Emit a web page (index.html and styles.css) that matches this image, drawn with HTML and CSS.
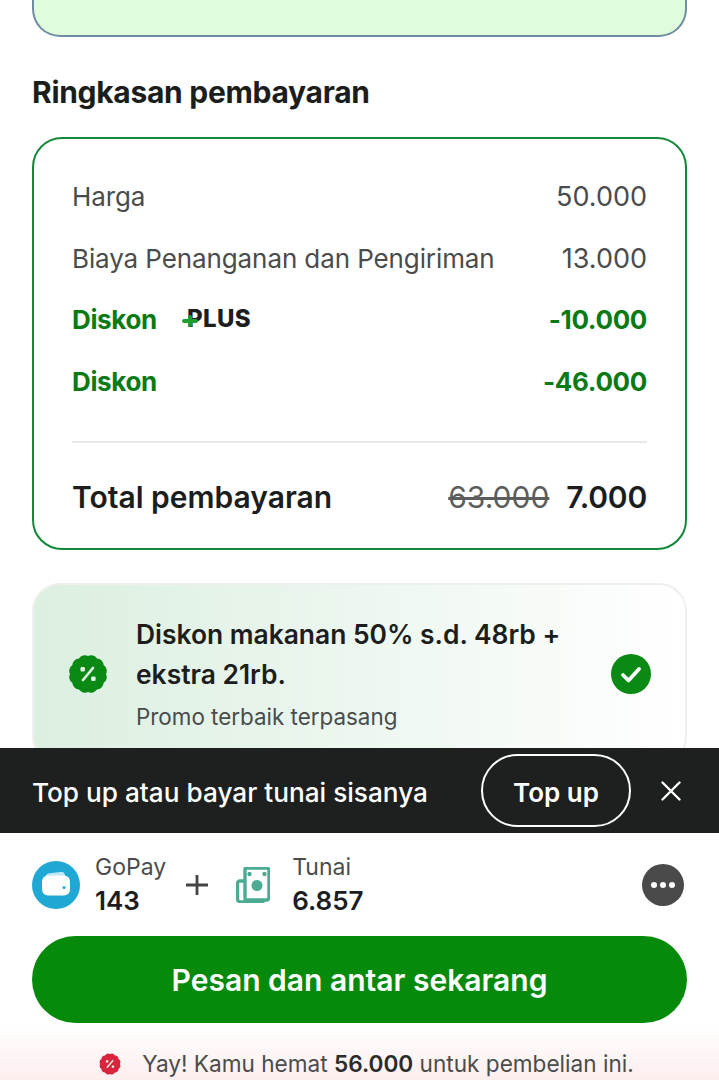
FILE: index.html
```html
<!DOCTYPE html>
<html lang="id">
<head>
<meta charset="utf-8">
<title>Ringkasan pembayaran</title>
<link rel="stylesheet" href="styles.css">
</head>
<body>
<svg class="defs" width="0" height="0" aria-hidden="true">
  <symbol id="badge" viewBox="0 0 40 40">
    <path fill="currentColor" d="M38 20A7 7 0 0 1 35.59 29A7 7 0 0 1 29 35.59A7 7 0 0 1 20 38A7 7 0 0 1 11 35.59A7 7 0 0 1 4.41 29A7 7 0 0 1 2 20A7 7 0 0 1 4.41 11A7 7 0 0 1 11 4.41A7 7 0 0 1 20 2A7 7 0 0 1 29 4.41A7 7 0 0 1 35.59 11A7 7 0 0 1 38 20Z"/>
    <path d="M25 14 15 26" stroke="#e6f5e8" stroke-width="2.600" stroke-linecap="round" fill="none"/>
    <rect x="12.500" y="13" width="4.400" height="4.400" rx="1.200" fill="#e6f5e8"/>
    <rect x="23.200" y="22.600" width="4.400" height="4.400" rx="1.200" fill="#e6f5e8"/>
  </symbol>
</svg>
<div class="page">
  <div class="top-card"></div>
  <h2 class="title">Ringkasan pembayaran</h2>
  <section class="summary">
    <div class="row"><span>Harga</span><span class="num">50.000</span></div>
    <div class="row"><span>Biaya Penanganan dan Pengiriman</span><span class="num">13.000</span></div>
    <div class="row green">
      <span class="with-logo">Diskon
        <span class="plus-logo">PLUS<svg class="plus-mark" viewBox="0 0 16 12"><path d="M2 6h12M8 2v8" stroke="#1f9d2e" stroke-width="4" stroke-linecap="round"/></svg></span>
      </span>
      <span>-10.000</span>
    </div>
    <div class="row green"><span>Diskon</span><span>-46.000</span></div>
    <div class="total">
      <span>Total pembayaran</span>
      <span class="amounts"><s>63.000</s><b>7.000</b></span>
    </div>
  </section>
  <section class="promo">
    <svg class="promo-badge"><use href="#badge"/></svg>
    <div class="promo-text">
      <div class="promo-title">Diskon makanan 50% s.d. 48rb + ekstra 21rb.</div>
      <div class="promo-sub">Promo terbaik terpasang</div>
    </div>
    <svg class="check" viewBox="0 0 40 40"><circle cx="20" cy="20" r="20" fill="#0a8a14"/><path d="M12 21l5.500 5.500L28 15" fill="none" stroke="#fff" stroke-width="3.800" stroke-linecap="round" stroke-linejoin="round"/></svg>
  </section>
</div>
<footer class="footer">
  <div class="topup-bar">
    <span class="topup-text">Top up atau bayar tunai sisanya</span>
    <span class="topup-btn">Top up</span>
    <svg class="close" viewBox="0 0 20 20"><path d="M1.500 1.500l17 17M18.500 1.500l-17 17" stroke="#fff" stroke-width="2.400" stroke-linecap="round"/></svg>
  </div>
  <div class="pay-row">
    <svg class="pay-icon" viewBox="0 0 48 48"><circle cx="24" cy="24" r="24" fill="#1fa8d3"/><path d="M13 17c0-2.500 1.800-4.500 4.500-4.800l11-1.300c2.500-.3 4.500 1.300 4.500 3.600V17Z" fill="#bfe8f5"/><rect x="10" y="14.500" width="28" height="20" rx="6" fill="#fff"/><circle cx="32" cy="26.500" r="1.500" fill="#1fa8d3"/></svg>
    <div class="pay-col"><span class="pay-label">GoPay</span><b class="pay-val">143</b></div>
    <svg class="pay-plus" viewBox="0 0 22 20"><path d="M0 10h22M11 0v20" stroke="#444" stroke-width="2.800"/></svg>
    <svg class="cash" viewBox="0 0 34 36"><path d="M9 2.500a1.500 1.500 0 0 1 1.500-1.500h20a2.500 2.500 0 0 1 2.500 2.500v27a2.500 2.500 0 0 1-2.500 2.500H10.500A1.500 1.500 0 0 1 9 31.500Z" fill="none" stroke="#4cab93" stroke-width="3.400"/><path d="M8 14H4a2.500 2.500 0 0 0-2.500 2.500v15.500a3 3 0 0 0 3 3h24" fill="none" stroke="#4cab93" stroke-width="3.400"/><circle cx="21" cy="18.500" r="5.500" fill="#4cab93"/><circle cx="13.500" cy="7" r="2.200" fill="#4cab93"/><circle cx="28.500" cy="7" r="2.200" fill="#4cab93"/></svg>
    <div class="pay-col"><span class="pay-label">Tunai</span><b class="pay-val">6.857</b></div>
    <span class="more"><i></i><i></i><i></i></span>
  </div>
  <div class="order">Pesan dan antar sekarang</div>
  <div class="saving">
    <svg class="saving-badge"><use href="#badge"/></svg>
    <span>Yay! Kamu hemat <b>56.000</b> untuk pembelian ini.</span>
  </div>
</footer>
</body>
</html>
```
FILE: styles.css
```css
* { box-sizing: border-box; }
html, body { margin: 0; height: 1080px; overflow: hidden; background: #fff; }
body { position: relative; font-family: Inter, "Noto Sans", sans-serif; color: #1c1d1d; }
.defs { position: absolute; }
.page { padding: 0 32px; }

.top-card {
  height: 37px;
  background: #dffcdc;
  border: 2px solid #6f8da0;
  border-top: 0;
  border-radius: 0 0 28px 28px;
}
.title {
  margin: 35px 0 25px;
  font-size: 30px;
  line-height: 40px;
  font-weight: 700;
  letter-spacing: -0.3px;
}
.summary {
  height: 413px;
  border: 2px solid #13883a;
  border-radius: 30px;
  padding: 27px 38px 0;
}
.row {
  display: flex;
  justify-content: space-between;
  align-items: center;
  height: 61.500px;
  font-size: 26px;
  letter-spacing: -0.1px;
  color: #4a4c4c;
}
.num { font-size: 27px; letter-spacing: 0; }
.row.green { color: #0a7a14; font-weight: 700; letter-spacing: -0.35px; }
.with-logo { display: flex; align-items: center; gap: 30px; }
.plus-logo {
  position: relative;
  font-size: 24px;
  font-weight: 800;
  color: #1c1d1d;
  line-height: 24px;
  letter-spacing: 0.4px;
  top: -1px;
}
.plus-mark { position: absolute; left: -5px; top: 8px; width: 16px; height: 12px; }
.total {
  display: flex;
  justify-content: space-between;
  align-items: center;
  margin-top: 29px;
  border-top: 2px solid #e8e9e9;
  height: 110px;
  font-size: 30px;
  font-weight: 600;
  color: #1c1d1d;
}
.amounts { display: flex; gap: 17px; align-items: center; }
.amounts s { font-weight: 400; color: #5c5e5e; }
.amounts b { font-weight: 600; letter-spacing: -0.2px; }

.promo {
  display: flex;
  align-items: center;
  margin-top: 33px;
  height: 182px;
  padding: 0 34px;
  border: 2px solid #eeefef;
  border-radius: 28px;
  background: linear-gradient(90deg, #dcefe0 0%, #e9f5ec 40%, #ffffff 100%);
}
.promo-badge { width: 40px; height: 40px; color: #0a8a14; flex: none; }
.promo-text { margin: -3px 0 0 28px; width: 440px; }
.promo-title { font-size: 26.400px; line-height: 40px; font-weight: 600; }
.promo-sub { font-size: 22.400px; line-height: 30px; margin-top: 8px; color: #4a4c4c; }
.check { width: 40px; height: 40px; margin-left: auto; flex: none; }

.footer {
  position: absolute;
  left: 0;
  right: 0;
  top: 748px;
  bottom: 0;
  background: #fff;
  display: flex;
  flex-direction: column;
}
.topup-bar {
  display: flex;
  align-items: center;
  height: 85px;
  padding: 0 38px 0 32px;
  background: #1e1f1f;
  color: #fff;
}
.topup-text { font-size: 26.200px; font-weight: 500; padding-top: 3px; }
.topup-btn {
  margin-left: auto;
  width: 150px;
  height: 73px;
  border: 2px solid #fff;
  border-radius: 37px;
  display: flex;
  align-items: center;
  justify-content: center;
  padding-top: 3px;
  font-size: 26px;
  font-weight: 600;
}
.close { width: 20px; height: 20px; margin-left: 30px; flex: none; }
.pay-row {
  display: flex;
  align-items: center;
  height: 103px;
  padding: 0 35px 0 32px;
}
.pay-icon { width: 48px; height: 48px; flex: none; }
.pay-col { display: flex; flex-direction: column; margin-left: 15px; }
.pay-label { font-size: 23px; line-height: 32px; color: #4a4c4c; }
.pay-val { font-size: 26px; line-height: 36px; font-weight: 600; }
.pay-plus { width: 22px; height: 20px; margin-left: 20px; flex: none; }
.cash { width: 34px; height: 36px; margin-left: 28px; flex: none; }
.cash + .pay-col { margin-left: 22px; }
.more {
  margin-left: auto;
  width: 42px;
  height: 42px;
  border-radius: 50%;
  background: #4a4a4a;
  display: flex;
  align-items: center;
  justify-content: center;
  gap: 3px;
}
.more i { width: 6px; height: 6px; border-radius: 50%; background: #fff; }
.order {
  margin: 0 32px;
  height: 87px;
  border-radius: 44px;
  background: #068a0c;
  color: #fff;
  font-size: 30px;
  font-weight: 600;
  display: flex;
  align-items: center;
  justify-content: center;
}
.saving {
  flex: 1;
  display: flex;
  align-items: flex-end;
  justify-content: center;
  gap: 21px;
  padding: 0 0 1px 14px;
  font-size: 22.600px;
  line-height: 30px;
  color: #4a4c4c;
  background: linear-gradient(180deg, #ffffff 0%, #fdeeee 100%);
}
.saving b { font-weight: 600; color: #2a2b2b; }
.saving-badge { width: 22px; height: 22px; color: #d8243c; flex: none; margin-bottom: 4px; }
```
